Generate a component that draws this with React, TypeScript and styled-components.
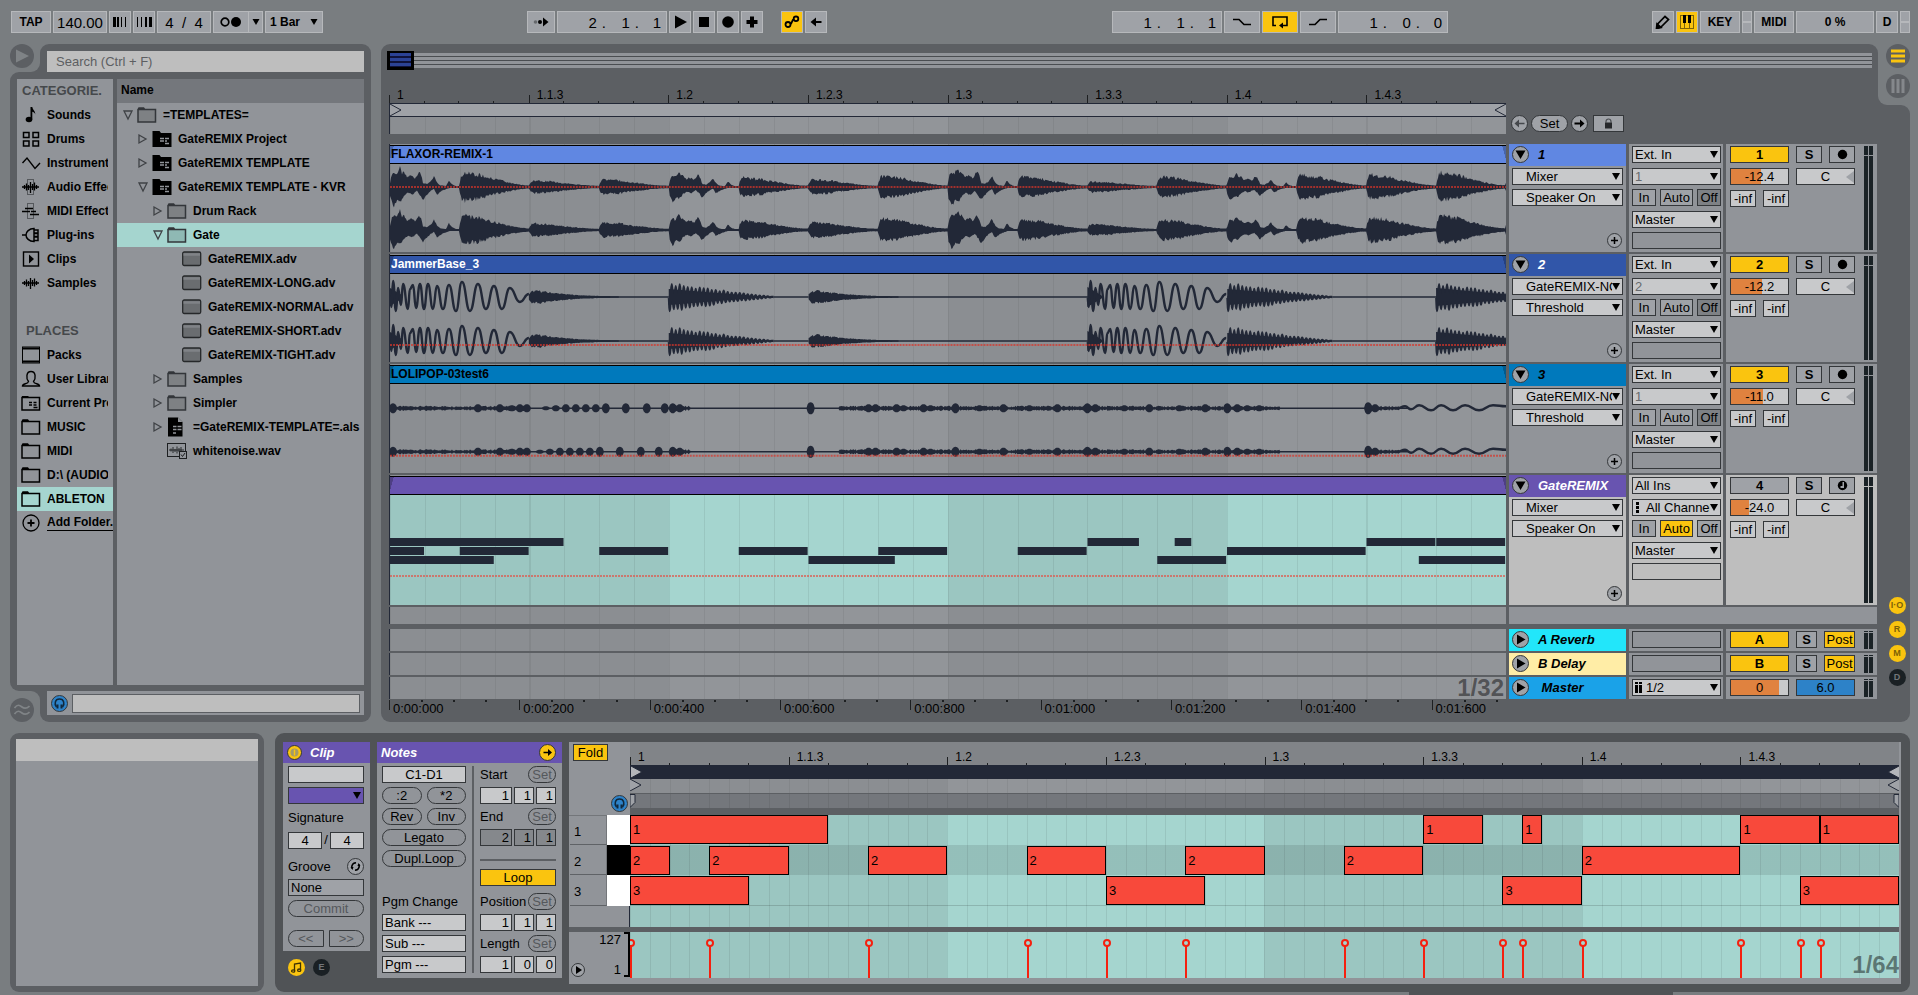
import React from "react";
import styled, {createGlobalStyle, css} from "styled-components";

const COLORS = {
    page: '#797d80',
    shell: '#5c5f63',
    shellDark: '#505356',
    surface: '#919499',
    surfaceDark: '#74777c',
    control: '#9fa2a7',
    field: '#c8c9cb',
    light: '#bebebe',
    edge: '#34373a',
    bevel: '#b6b8bb',
    yellow: '#fac40f',
    orange: '#e0823f',
    blue: '#2d82c8',
    mint: '#a5d5cf',
    mintDark: '#9bc6c1',
    ink: '#222837',
    purple: '#6854b0',
    red: '#f8493b',
    stem: '#f5200f',
}

const GlobalStyle = createGlobalStyle`
    *, *::before, *::after {
        box-sizing: border-box;
    }

    body {
        margin: 0;
        background-color: ${COLORS.page};
        color: #000;
        font-family: "Liberation Sans", Arial, sans-serif;
        font-size: 13px;
        line-height: 15px;
    }

    button, input, select {
        font: inherit;
        color: inherit;
        margin: 0;
        padding: 0;
        border: 0;
        border-radius: 0;
        background: none;
    }

    svg {
        display: block;
    }
`

const StyledApp = styled.div`
    padding: 0 8px 9px 10px;
`

/* toolbar */

const StyledToolbar = styled.header`
    display: flex;
    height: 44px;
    padding: 11px 0 11px 1px;
`

const StyledGroup = styled.div`
    display: flex;
    gap: 2px;
`

const StyledSpacer = styled.div<{grow: number}>`
    flex: ${props => props.grow} 1 0;
`

const cssBevel = css`
    background-color: ${COLORS.control};
    border: 1px solid ${COLORS.bevel};
`

const StyledToolButton = styled.button<{$width?: number, $on?: boolean, $gap?: boolean}>`
    ${cssBevel};
    display: flex;
    align-items: center;
    justify-content: center;
    gap: 10px;
    width: ${props => props.$width ?? 22}px;
    height: 22px;
    font-size: 12px;
    font-weight: bold;
    background-color: ${props => props.$on ? COLORS.yellow : COLORS.control};
    margin-left: ${props => props.$gap ? 16 : 0}px;
`

const StyledTempo = styled.input`
    ${cssBevel};
    width: 54px;
    height: 22px;
    font-size: 15px;
    text-align: center;
`

const StyledPosition = styled.div`
    ${cssBevel};
    display: grid;
    grid-template-columns: 1fr 33px 22px;
    align-items: center;
    width: 110px;
    height: 22px;
    padding-right: 5px;
    font-size: 15px;
`

const StyledPositionPart = styled.span`
    display: flex;
    justify-content: flex-end;
    gap: 5px;
`

const StyledMetronome = styled.div`
    ${cssBevel};
    display: grid;
    grid-template-columns: 1fr 14px;
    width: 50px;

    button {
        display: flex;
        align-items: center;
        justify-content: center;
    }

    button + button {
        border-left: 1px solid ${COLORS.bevel};
    }
`

const StyledLeds = styled.div`
    width: 10px;
    display: grid;
    grid-template-rows: 1fr 1fr;

    i {
        ${cssBevel};
    }
`

const Position: React.FC<{label: string, parts: string[]}> = ({label, parts}) => (
    <StyledPosition role="group" aria-label={label}>
        {parts.map((part, index) => (
            <StyledPositionPart key={index}>
                <span>{part}</span>
                {index < 2 && <span>.</span>}
            </StyledPositionPart>
        ))}
    </StyledPosition>
)

const Bars: React.FC<{widths: number[]}> = ({widths}) => (
    <svg width="16" height="12">
        {widths.map((width, index) => (
            <rect key={index} x={index * 4 + 1} y="1" width={width} height="10"/>
        ))}
    </svg>
)

const DownTriangle = () => <svg width="8" height="6"><path d="M0.5 0h7L4 6z"/></svg>

const Toolbar: React.FC = () => (
    <StyledToolbar>
        <StyledGroup>
            <StyledToolButton $width={40}>TAP</StyledToolButton>
            <StyledTempo aria-label="Tempo" defaultValue="140.00"/>
            <StyledToolButton aria-label="Nudge down"><Bars widths={[3, 2, 1, 1]}/></StyledToolButton>
            <StyledToolButton aria-label="Nudge up"><Bars widths={[1, 1, 2, 3]}/></StyledToolButton>
            <StyledTempo aria-label="Time signature" defaultValue="4  /  4"/>
            <StyledMetronome>
                <button aria-label="Metronome">
                    <svg width="22" height="12">
                        <circle cx="5" cy="6" r="3.8" fill="none" stroke="#000" strokeWidth="1.7"/>
                        <circle cx="16" cy="6" r="5"/>
                    </svg>
                </button>
                <button aria-label="Metronome options"><DownTriangle/></button>
            </StyledMetronome>
            <StyledToolButton $width={58}>1 Bar <DownTriangle/></StyledToolButton>
        </StyledGroup>
        <StyledSpacer grow={204}/>
        <StyledGroup>
            <StyledToolButton $width={28} aria-label="Follow">
                <svg width="16" height="10">
                    <circle cx="2.5" cy="5" r="1.8" fill="#66696d"/>
                    <circle cx="7" cy="5" r="2"/>
                    <path d="M10 0.5L15.5 5L10 9.5z"/>
                </svg>
            </StyledToolButton>
            <Position label="Arrangement position" parts={['2', '1', '1']}/>
            <StyledToolButton aria-label="Play"><svg width="14" height="14"><path d="M2 0.5L14 7L2 13.5z"/></svg></StyledToolButton>
            <StyledToolButton aria-label="Stop"><svg width="10" height="10"><rect width="10" height="10"/></svg></StyledToolButton>
            <StyledToolButton aria-label="Record"><svg width="12" height="12"><circle cx="6" cy="6" r="5.8"/></svg></StyledToolButton>
            <StyledToolButton aria-label="Overdub"><svg width="12" height="12"><path d="M4 0.5h4V4h3.5v4H8v3.5H4V8H0.5V4H4z"/></svg></StyledToolButton>
            <StyledToolButton $on $gap aria-label="Automation arm">
                <svg width="16" height="14" fill="none" stroke="#000" strokeWidth="1.8">
                    <circle cx="4" cy="9.5" r="2.5"/>
                    <circle cx="12" cy="3.8" r="2.3"/>
                    <path d="M6.3 9C8.5 9 7.5 4.5 9.7 4.3"/>
                </svg>
            </StyledToolButton>
            <StyledToolButton aria-label="Re-enable automation">
                <svg width="12" height="10"><path d="M0.5 5L6 0.5V4h5.5v2H6v3.5z"/></svg>
            </StyledToolButton>
        </StyledGroup>
        <StyledSpacer grow={285}/>
        <StyledGroup>
            <Position label="Loop start" parts={['1', '1', '1']}/>
            <StyledToolButton $width={36} aria-label="Punch in">
                <svg width="18" height="8" fill="none" stroke="#000" strokeWidth="1.7"><path d="M0 1.5h6l5 5h7"/></svg>
            </StyledToolButton>
            <StyledToolButton $width={36} $on aria-label="Loop">
                <svg width="18" height="14" fill="none" stroke="#000" strokeWidth="1.6">
                    <path d="M5 10.5H2V2h14v8.5h-4"/>
                    <path d="M8 10.5l4-3v6z" fill="#000" stroke="none"/>
                </svg>
            </StyledToolButton>
            <StyledToolButton $width={36} aria-label="Punch out">
                <svg width="18" height="8" fill="none" stroke="#000" strokeWidth="1.7"><path d="M0 6.5h6l5-5h7"/></svg>
            </StyledToolButton>
            <Position label="Loop length" parts={['1', '0', '0']}/>
        </StyledGroup>
        <StyledSpacer grow={204}/>
        <StyledGroup>
            <StyledToolButton aria-label="Draw mode">
                <svg width="16" height="14" fill="none" stroke="#000" strokeWidth="1.7">
                    <path d="M10 1.5l3.5 3L6 12l-4 1 0.7-4z"/>
                    <path d="M2 9l4 3.5L1.5 13.5z" fill="#000"/>
                </svg>
            </StyledToolButton>
            <StyledToolButton $on aria-label="Computer MIDI keyboard">
                <svg width="14" height="14">
                    <rect x="0.5" y="0.5" width="13" height="13" fill="none" stroke="#7d6207"/>
                    <path d="M4.5 8v6M9.5 8v6" stroke="#7d6207"/>
                    <path d="M3 0h3v8H3zM8 0h3v8H8z"/>
                </svg>
            </StyledToolButton>
            <StyledToolButton $width={40}>KEY</StyledToolButton>
            <StyledLeds><i/><i/></StyledLeds>
            <StyledToolButton $width={40}>MIDI</StyledToolButton>
            <StyledToolButton $width={78}>0 %</StyledToolButton>
            <StyledToolButton>D</StyledToolButton>
            <StyledLeds><i/><i/></StyledLeds>
        </StyledGroup>
    </StyledToolbar>
)

/* browser */

const StyledUpper = styled.div`
    display: flex;
    gap: 10px;
`

const StyledBrowser = styled.aside`
    flex: none;
    width: 361px;
    display: flex;
    flex-direction: column;
`

const StyledTabRow = styled.div`
    display: grid;
    grid-template-columns: 30px 1fr;
`

// page coloured cut-out that sits on the shell colour, so its inner corner is concave
const StyledNotch = styled.div<{$corner: 'bottom-right' | 'top-right'}>`
    background-color: ${COLORS.shell};

    > div {
        display: flex;
        align-items: ${props => props.$corner === 'top-right' ? 'flex-end' : 'flex-start'};
        height: 100%;
        background-color: ${COLORS.page};
        border-${props => props.$corner}-radius: 9px;
    }
`

const StyledRoundTab = styled.button`
    display: flex;
    align-items: center;
    justify-content: center;
    width: 24px;
    height: 24px;
    border-radius: 50%;
    background-color: ${COLORS.shell};
`

const StyledSearchTab = styled.div`
    background-color: ${COLORS.shell};
    border-radius: 9px 9px 0 0;
    padding: 7px 7px 0;
`

const StyledSearch = styled.input`
    width: 100%;
    height: 21px;
    padding: 0 9px;
    background-color: ${COLORS.light};

    &::placeholder {
        color: #5d5f62;
        opacity: 1;
    }
`

const StyledBrowserBody = styled.div`
    flex: 1;
    display: grid;
    grid-template-columns: 96px minmax(0, 1fr);
    gap: 4px;
    padding: 7px 7px 6px;
    background-color: ${COLORS.shell};
    border-radius: 9px 0 0 9px;
`

const StyledPane = styled.div`
    background-color: ${COLORS.surface};
    font-size: 12px;
    font-weight: bold;
    overflow: hidden;
`

const StyledPreviewTab = styled.div`
    background-color: ${COLORS.shell};
    border-radius: 0 0 9px 9px;
    padding: 0 7px 7px;
`

const StyledPreview = styled.div`
    display: flex;
    align-items: center;
    gap: 4px;
    height: 24px;
    padding: 0 4px;
    background-color: ${COLORS.surface};
`

const StyledPreviewWave = styled.div`
    flex: 1;
    height: 19px;
    background-color: ${COLORS.light};
    border: 1px solid ${COLORS.shell};
`

const StyledPaneTitle = styled.div<{$indent?: boolean}>`
    height: 24px;
    padding-left: ${props => props.$indent ? 9 : 5}px;
    font-size: 13px;
    line-height: 23px;
    color: #45484b;
    white-space: nowrap;
    overflow: hidden;
`

const StyledCategory = styled.button<{$selected?: boolean, $link?: boolean}>`
    display: grid;
    grid-template-columns: 20px minmax(0, 1fr);
    gap: 6px;
    align-items: center;
    width: 100%;
    height: 24px;
    padding: 0 ${props => props.$link ? 0 : 5}px 0 4px;
    text-align: left;
    background-color: ${props => props.$selected ? COLORS.mint : 'transparent'};

    span {
        white-space: nowrap;
        overflow: hidden;
        border-bottom: ${props => props.$link ? '1px solid #000' : 'none'};
    }
`

const StyledBlankRow = styled.div`
    height: 24px;
`

const StyledNameHeader = styled.div`
    height: 24px;
    padding-left: 4px;
    line-height: 23px;
    background-color: ${COLORS.surfaceDark};
`

const StyledTreeRow = styled.button<{$level: number, $selected?: boolean}>`
    display: flex;
    align-items: center;
    width: 100%;
    height: 24px;
    padding-left: ${props => 5 + props.$level * 15}px;
    white-space: nowrap;
    overflow: hidden;
    background-color: ${props => props.$selected ? COLORS.mint : 'transparent'};

    svg {
        flex: none;
    }
`

const StyledToggle = styled.span`
    flex: none;
    width: 15px;
    display: flex;
`

const StyledTreeIcon = styled.span`
    flex: none;
    width: 26px;
`

const FolderIcon: React.FC<{fill?: string, stroke?: string}> = ({fill = 'none', stroke = '#000'}) => (
    <svg width="20" height="18">
        <path d="M1 3.5V2.2a1 1 0 0 1 1-1h5l1.5 2.3z" fill={stroke}/>
        <path d="M1 3.5h17.5V16H1z" fill={fill} stroke={stroke} strokeWidth="1.5"/>
    </svg>
)

const ProjectIcon = () => (
    <svg width="20" height="18">
        <path d="M0.5 1h7L9 3h10.5v14H0.5z"/>
        <path d="M8 8.5h4M13 8.5h4M8 11h4M13 11h2M13 13.5h4" stroke={COLORS.surface} strokeWidth="1.3"/>
    </svg>
)

const CurrentProjectIcon = () => (
    <svg width="20" height="18">
        <path d="M1 3.5V2h6l1.5 1.5z"/>
        <path d="M1 3.5h17.5V16H1z" fill="none" stroke="#000" strokeWidth="1.5"/>
        <path d="M8 8.5h3M12.5 8.5h3M8 11h3M12.5 11h3M12.5 13.5h4" stroke="#000" strokeWidth="1.3"/>
    </svg>
)

const PresetIcon = () => (
    <svg width="20" height="16">
        <rect x="0.7" y="1" width="18" height="13.5" rx="1.5" fill="#6a6d70" stroke="#26282a" strokeWidth="1.3"/>
        <path d="M1.5 3.5h16.5" stroke="#808387" strokeWidth="2.5"/>
    </svg>
)

const SetIcon = () => (
    <svg width="20" height="20">
        <path d="M1 0.5h10L15.5 5v14.5H1z"/>
        <path d="M11 0.5V5h4.5" fill={COLORS.surface}/>
        <path d="M6 9.5h3.5M10.5 9.5h4M6 12.5h3.5M10.5 12.5h4M6 16h3" stroke={COLORS.surface} strokeWidth="1.5"/>
    </svg>
)

const SampleFileIcon = () => (
    <svg width="20" height="18" fill="none" stroke="#1d1f21">
        <rect x="0.5" y="1.5" width="18" height="13"/>
        <path d="M2 8h15M4 6.5v3M6 5v6M8 7v3M10 4.5v7M12 6v4M14 5v5" strokeWidth="0.9"/>
        <rect x="12.5" y="9.5" width="7" height="7" fill={COLORS.surface}/>
        <path d="M14 12.5l1.5 2L18 11"/>
    </svg>
)

const WaveGlyph: React.FC<{boxed?: boolean}> = ({boxed}) => (
    <svg width="20" height="18" stroke="#000">
        {boxed && <rect x="6.5" y="1.5" width="6" height="15" fill="none" stroke="#55585c"/>}
        <path d="M1 9h17M3.5 7v4M5.5 5.5v7M7.5 7v5M9.5 4v11M11.5 6v6M13.5 4.5v8M15.5 7v4" strokeWidth="1.3"/>
    </svg>
)

const categories: {name: string, icon: React.ReactNode}[] = [
    {
        name: 'Sounds',
        icon: <svg width="20" height="18"><ellipse cx="8" cy="13.5" rx="3.3" ry="2.7"/><path d="M9.5 1h1.8c0.5 3 3 3.5 3 7.5-0.5-2-2-2.5-3-2.8v7.8H9.5z"/></svg>,
    },
    {
        name: 'Drums',
        icon: <svg width="20" height="18" fill="none" stroke="#000" strokeWidth="1.5"><path d="M2.5 2.5H8v5H2.5zM12 2.5h5.5v5H12zM2.5 11H8v5H2.5zM12 11h5.5v5H12z"/></svg>,
    },
    {
        name: 'Instruments',
        icon: <svg width="20" height="18" fill="none" stroke="#000" strokeWidth="1.4"><path d="M1.5 9L6 4l8 10.5L19 9"/></svg>,
    },
    {name: 'Audio Effects', icon: <WaveGlyph boxed/>},
    {
        name: 'MIDI Effects',
        icon: <svg width="20" height="18" fill="none" stroke="#000" strokeWidth="1.4"><rect x="6.5" y="1.5" width="6" height="15" stroke="#55585c" strokeWidth="1"/><path d="M4 6.5h8M1 9.5h8M10 9.5h5M9 12.5h9"/></svg>,
    },
    {
        name: 'Plug-ins',
        icon: <svg width="20" height="18" fill="none" stroke="#000" strokeWidth="1.5"><path d="M1 9h4M13 2.5v13C8 15.500 5 12 5 9s3-6.500 8-6.500zM13 4h4v3h-4M13 7.5h4v3h-4M13 11h4v3.500h-4"/></svg>,
    },
    {
        name: 'Clips',
        icon: <svg width="20" height="18"><rect x="2.5" y="2" width="15" height="14" fill="none" stroke="#000" strokeWidth="1.4"/><path d="M8 4.5L13 9l-5 4.5z"/></svg>,
    },
    {name: 'Samples', icon: <WaveGlyph/>},
]

const places: {name: string, icon: React.ReactNode}[] = [
    {
        name: 'Packs',
        icon: <svg width="20" height="18" fill="none" stroke="#000"><rect x="1.5" y="1" width="17" height="16"/><path d="M1.5 2.5h17M1.5 15.5h17" strokeWidth="2"/></svg>,
    },
    {
        name: 'User Library',
        icon: <svg width="20" height="18" fill="none" stroke="#000" strokeWidth="1.4"><path d="M1.5 16c0-3 5.500-1.500 6-4.500C5 8.500 5 1.500 10 1.500s5 7 2.500 10c0.500 3 6 1.500 6 4.500z"/></svg>,
    },
    {name: 'Current Project', icon: <CurrentProjectIcon/>},
    {name: 'MUSIC', icon: <FolderIcon/>},
    {name: 'MIDI', icon: <FolderIcon/>},
    {name: 'D:\\ (AUDIO)', icon: <FolderIcon/>},
    {name: 'ABLETON', icon: <FolderIcon/>},
]

type TreeNode = {
    name: string,
    level: number,
    icon: React.ReactNode,
    open?: boolean,
    selected?: boolean,
}

const treeFolder = <FolderIcon fill="#7e8184" stroke="#33363a"/>

const tree: TreeNode[] = [
    {name: '=TEMPLATES=', level: 0, icon: treeFolder, open: true},
    {name: 'GateREMIX Project', level: 1, icon: <ProjectIcon/>, open: false},
    {name: 'GateREMIX TEMPLATE', level: 1, icon: <ProjectIcon/>, open: false},
    {name: 'GateREMIX TEMPLATE - KVR', level: 1, icon: <ProjectIcon/>, open: true},
    {name: 'Drum Rack', level: 2, icon: treeFolder, open: false},
    {name: 'Gate', level: 2, icon: <FolderIcon fill="#8fb9b4" stroke="#33363a"/>, open: true, selected: true},
    {name: 'GateREMIX.adv', level: 3, icon: <PresetIcon/>},
    {name: 'GateREMIX-LONG.adv', level: 3, icon: <PresetIcon/>},
    {name: 'GateREMIX-NORMAL.adv', level: 3, icon: <PresetIcon/>},
    {name: 'GateREMIX-SHORT.adv', level: 3, icon: <PresetIcon/>},
    {name: 'GateREMIX-TIGHT.adv', level: 3, icon: <PresetIcon/>},
    {name: 'Samples', level: 2, icon: treeFolder, open: false},
    {name: 'Simpler', level: 2, icon: treeFolder, open: false},
    {name: '=GateREMIX-TEMPLATE=.als', level: 2, icon: <SetIcon/>, open: false},
    {name: 'whitenoise.wav', level: 2, icon: <SampleFileIcon/>},
]

const HeadphoneButton: React.FC = () => (
    <StyledCircle aria-label="Preview" $fill={COLORS.blue}>
        <svg width="13" height="13" fill="none" stroke="#10283c" strokeWidth="1.6">
            <path d="M3.5 10C1 7 2 2 6.5 2s5.5 5 3 8"/>
            <path d="M4.5 7.5v4M8.5 7.5v4" strokeWidth="2"/>
        </svg>
    </StyledCircle>
)

const Browser: React.FC = () => (
    <StyledBrowser>
        <StyledTabRow>
            <StyledNotch $corner="bottom-right">
                <div>
                    <StyledRoundTab aria-label="Hide browser">
                        <svg width="14" height="14"><path d="M1 0.5L14 7L1 13.5z" fill="#7f8386"/></svg>
                    </StyledRoundTab>
                </div>
            </StyledNotch>
            <StyledSearchTab>
                <StyledSearch aria-label="Search" placeholder="Search (Ctrl + F)"/>
            </StyledSearchTab>
        </StyledTabRow>
        <StyledBrowserBody>
            <StyledPane>
                <StyledPaneTitle>CATEGORIE.</StyledPaneTitle>
                {categories.map(({name, icon}) => (
                    <StyledCategory key={name}>{icon}<span>{name}</span></StyledCategory>
                ))}
                <StyledBlankRow/>
                <StyledPaneTitle $indent>PLACES</StyledPaneTitle>
                {places.map(({name, icon}) => (
                    <StyledCategory key={name} $selected={name === 'ABLETON'}>{icon}<span>{name}</span></StyledCategory>
                ))}
                <StyledCategory $link>
                    <svg width="20" height="18" fill="none" stroke="#000" strokeWidth="1.3">
                        <circle cx="10" cy="9" r="8"/>
                        <path d="M6.5 9h7M10 5.5v7" strokeWidth="1.8"/>
                    </svg>
                    <span>Add Folder...</span>
                </StyledCategory>
            </StyledPane>
            <StyledPane>
                <StyledNameHeader>Name</StyledNameHeader>
                {tree.map(({name, level, icon, open, selected}) => (
                    <StyledTreeRow key={name} $level={level} $selected={selected}>
                        <StyledToggle>
                            {open !== undefined && (
                                <svg width="12" height="12" fill="none" stroke="#3f4246" strokeWidth="1.3">
                                    <path d={open ? 'M2 2h8L6 10z' : 'M2 2l7 4-7 4z'}/>
                                </svg>
                            )}
                        </StyledToggle>
                        <StyledTreeIcon>{icon}</StyledTreeIcon>
                        {name}
                    </StyledTreeRow>
                ))}
            </StyledPane>
        </StyledBrowserBody>
        <StyledTabRow>
            <StyledNotch $corner="top-right">
                <div>
                    <StyledRoundTab aria-label="Groove pool">
                        <svg width="16" height="14" fill="none" stroke="#808487" strokeWidth="1.7">
                            <path d="M0.5 5c3-4 5-3 7.5-1s4.500 2 7.500-1M0.5 11c3-4 5-3 7.5-1s4.500 2 7.500-1"/>
                        </svg>
                    </StyledRoundTab>
                </div>
            </StyledNotch>
            <StyledPreviewTab>
                <StyledPreview>
                    <HeadphoneButton/>
                    <StyledPreviewWave/>
                </StyledPreview>
            </StyledPreviewTab>
        </StyledTabRow>
    </StyledBrowser>
)

/* shared controls */

const StyledCircle = styled.button<{$fill?: string, $size?: number}>`
    flex: none;
    display: flex;
    align-items: center;
    justify-content: center;
    width: ${props => props.$size ?? 17}px;
    height: ${props => props.$size ?? 17}px;
    border: 1px solid ${COLORS.edge};
    border-radius: 50%;
    background-color: ${props => props.$fill ?? COLORS.control};
`

const cssBox = css`
    height: 17px;
    border: 1px solid ${COLORS.edge};
    line-height: 15px;
    white-space: nowrap;
    overflow: hidden;
`

const StyledBoxButton = styled.button<{$on?: boolean, $off?: boolean, $bold?: boolean}>`
    ${cssBox};
    display: flex;
    align-items: center;
    justify-content: center;
    background-color: ${props => props.$on ? COLORS.yellow : props.$off ? '#7e8185' : COLORS.control};
    font-weight: ${props => props.$bold ? 'bold' : 'normal'};
`

const StyledPill = styled.button<{$dim?: boolean, $shape?: string}>`
    height: 17px;
    border: 1px solid ${COLORS.edge};
    border-radius: ${props => props.$shape ?? '9px'};
    background-color: ${COLORS.surface};
    color: ${props => props.$dim ? '#55585c' : '#000'};
    line-height: 15px;
    text-align: center;
    white-space: nowrap;
`

const StyledEmptyBox = styled.div`
    ${cssBox};
`

const StyledField = styled.input<{$fill?: number, $background?: string, $align?: string, $tight?: boolean}>`
    ${cssBox};
    width: 100%;
    min-width: 0;
    padding: 0 ${props => props.$tight ? 0 : 2}px;
    text-align: ${props => props.$align ?? 'center'};
    background: ${props => `linear-gradient(90deg, ${COLORS.orange} ${props.$fill ?? 0}%, ${props.$background ?? COLORS.field} ${props.$fill ?? 0}%)`};
`

const StyledSelectWrapper = styled.div<{$background?: string}>`
    position: relative;
    background-color: ${props => props.$background ?? COLORS.field};

    &::after {
        content: '';
        position: absolute;
        right: 3px;
        top: 5px;
        border: 4px solid transparent;
        border-top: 7px solid #000;
        border-bottom: 0;
        pointer-events: none;
    }
`

const StyledSelect = styled.select<{$indent?: number, $dim?: boolean}>`
    ${cssBox};
    display: block;
    appearance: none;
    width: 100%;
    padding: 0 10px 0 ${props => props.$indent ?? 2}px;
    color: ${props => props.$dim ? '#66696d' : '#000'};
`

const StyledSelectGlyph = styled.span`
    position: absolute;
    left: 3px;
    top: 3px;
    pointer-events: none;
`

type SelectProps = {
    label: string,
    value: string,
    indent?: number,
    dim?: boolean,
    background?: string,
    glyph?: React.ReactNode,
}

const Select: React.FC<SelectProps> = ({label, value, indent, dim, background, glyph}) => (
    <StyledSelectWrapper $background={background}>
        {glyph && <StyledSelectGlyph>{glyph}</StyledSelectGlyph>}
        <StyledSelect aria-label={label} $indent={indent} $dim={dim}>
            <option>{value}</option>
        </StyledSelect>
    </StyledSelectWrapper>
)

/* arrangement */

const StyledArranger = styled.main`
    flex: 1;
    min-width: 0;
    display: grid;
    grid-template-columns: minmax(0, 1fr) 32px;
`

const StyledArrangerPanel = styled.div`
    background-color: ${COLORS.shell};
    border-radius: 9px 9px 0 9px;
    padding: 9px 1px 0 8px;
`

const StyledGutter = styled.div`
    display: flex;
    flex-direction: column;
`

const StyledViewNotch = styled.div`
    background-color: ${COLORS.shell};

    > div {
        display: flex;
        flex-direction: column;
        align-items: flex-end;
        gap: 6px;
        height: 61px;
        background-color: ${COLORS.page};
        border-bottom-left-radius: 9px;
    }
`

const StyledGutterBody = styled.div`
    flex: 1;
    display: flex;
    flex-direction: column;
    justify-content: flex-end;
    align-items: center;
    gap: 7px;
    padding: 0 0 36px 6px;
    background-color: ${COLORS.shell};
    border-radius: 0 9px 9px 0;
`

const StyledShowButton = styled.button<{$on?: boolean}>`
    width: 17px;
    height: 17px;
    border-radius: 50%;
    font-size: 9px;
    font-weight: bold;
    line-height: 17px;
    text-align: center;
    background-color: ${props => props.$on ? COLORS.yellow : '#1a2024'};
    color: ${props => props.$on ? '#7d6207' : '#73767a'};
`

const StyledOverview = styled.div`
    position: relative;
    height: 15px;
    margin: 0 5px 0 0;
    background: repeating-linear-gradient(180deg, ${COLORS.surface} 0 3px, #4a4d51 3px 4px);
`

const StyledOverviewWindow = styled.div`
    position: absolute;
    left: -2px;
    top: -2px;
    width: 27px;
    height: 19px;
    border: 3px solid #000;
    border-top-width: 2px;
    background: repeating-linear-gradient(180deg, #2b4296 0 3px, #10133c 3px 5px);
`

const cssTrackColumns = css`
    display: grid;
    grid-template-columns: minmax(0, 1fr) 117px 94px 151px;
    column-gap: 3px;
`

const StyledTimelineHead = styled.div`
    ${cssTrackColumns};
    margin-bottom: 10px;
`

const StyledRuler = styled.div<{$height: number}>`
    display: grid;
    grid-template-columns: repeat(8, minmax(0, 1fr));
    height: ${props => props.$height}px;
    font-size: 12px;

    span {
        display: flex;
        align-items: flex-end;
        padding-left: 8px;
        background:
            linear-gradient(#1d1f21, #1d1f21) 0 100% / 1px 8px no-repeat,
            linear-gradient(#1d1f21, #1d1f21) 25% 100% / 1px 2px no-repeat,
            linear-gradient(#1d1f21, #1d1f21) 50% 100% / 1px 2px no-repeat,
            linear-gradient(#1d1f21, #1d1f21) 75% 100% / 1px 2px no-repeat;
    }
`

const StyledLoopBar = styled.div`
    display: flex;
    justify-content: space-between;
    height: 14px;
    border: 1px solid ${COLORS.ink};
    border-right: 0;
    background-color: ${COLORS.control};
`

const cssGrid = css<{$division?: number}>`
    background:
        repeating-linear-gradient(90deg, rgba(0, 0, 0, 0.06) 0 1px, transparent 1px calc(100% / ${props => props.$division ?? 32})),
        repeating-linear-gradient(90deg, #8b8e92 0 25%, #929599 25% 50%);
`

const StyledScrub = styled.div`
    ${cssGrid};
    height: 17px;
    border-left: 1px solid ${COLORS.ink};
`

const StyledLocators = styled.div`
    grid-column: 2 / 5;
    align-self: end;
    display: flex;
    align-items: center;
    gap: 3px;
    padding: 0 0 2px 2px;
`

const StyledLocatorPill = styled(StyledPill)`
    width: 37px;
    background-color: ${COLORS.control};
`

const StyledLock = styled(StyledBoxButton)`
    width: 31px;
    margin-left: 2px;
`

const StyledTracks = styled.div`
    display: flex;
    flex-direction: column;
    gap: 2px;
`

const StyledTrack = styled.section<{$height: number, $spaced?: boolean}>`
    ${cssTrackColumns};
    grid-template-rows: minmax(0, 1fr);
    height: ${props => props.$height}px;
    margin-top: ${props => props.$spaced ? 3 : 0}px;
`

const StyledLane = styled.div`
    ${cssGrid};
    display: flex;
    flex-direction: column;
    border-left: 1px solid ${COLORS.ink};
    padding-top: 1px;
    min-width: 0;
    min-height: 0;
`

const StyledEmptyLane = styled.div`
    ${cssGrid};
    display: flex;
    align-items: center;
    justify-content: flex-end;
    padding-right: 2px;
    border-left: 1px solid ${COLORS.ink};
`

const StyledClipTitle = styled.div<{$color: string, $light?: boolean}>`
    flex: none;
    height: 19px;
    padding-left: 1px;
    border-top: 1px solid #000;
    border-bottom: 1px solid #000;
    background:
        linear-gradient(75deg, transparent 60%, rgba(0, 0, 0, 0.25) 62%) 100% 0 / 5px 17px no-repeat,
        linear-gradient(105deg, rgba(0, 0, 0, 0.25) 38%, transparent 40%) 0 0 / 5px 17px no-repeat,
        ${props => props.$color};
    color: ${props => props.$light ? '#fff' : '#000'};
    font-size: 12px;
    font-weight: bold;
    line-height: 17px;
`

const StyledMidiBody = styled.div`
    flex: 1;
    display: flex;
    min-height: 0;
    background:
        repeating-linear-gradient(90deg, rgba(0, 0, 0, 0.07) 0 1px, transparent 1px calc(100% / 32)),
        repeating-linear-gradient(90deg, ${COLORS.mintDark} 0 25%, ${COLORS.mint} 25% 50%);
`

const StyledChart = styled.svg`
    flex: 1;
    width: 100%;
    height: 100%;
    min-height: 0;
`

const StyledGridLabel = styled.span`
    font-size: 24px;
    line-height: 22px;
    font-weight: bold;
    color: rgba(0, 0, 0, 0.45);
`

const StyledCell = styled.div<{$selected?: boolean}>`
    background-color: ${props => props.$selected ? COLORS.light : COLORS.surface};
    min-width: 0;
`

const StyledNameCell = styled(StyledCell)`
    display: flex;
    flex-direction: column;
    padding-bottom: 4px;
`

const StyledNameStrip = styled.div<{$color: string, $light?: boolean}>`
    display: flex;
    align-items: center;
    gap: 9px;
    height: 22px;
    padding: 0 0 1px 3px;
    background-color: ${props => props.$color};
    color: ${props => props.$light ? '#fff' : '#000'};
    font-weight: bold;
    font-style: italic;
    white-space: nowrap;
`

const StyledDevices = styled.div`
    display: flex;
    flex-direction: column;
    gap: 4px;
    padding: 2px 3px 0;
`

const StyledAddLane = styled(StyledCircle)`
    margin: auto 4px 0 auto;
`

const StyledIoCell = styled(StyledCell)`
    padding: 2px 2px 0 3px;
`

const StyledRows = styled.div`
    display: flex;
    flex-direction: column;
    justify-content: space-between;
    height: 103px;
`

const StyledMonitor = styled.div`
    display: grid;
    grid-template-columns: 24px 1fr 24px;
    gap: 4px;
`

const StyledMixerCell = styled(StyledCell)`
    display: grid;
    grid-template-columns: 125px auto;
    justify-content: space-between;
    padding: 2px 4px 2px 4px;
`

const StyledMixerRows = styled.div`
    display: grid;
    grid-template-columns: 26px 26px 26px 26px;
    grid-auto-rows: 17px;
    gap: 5px 7px;
    align-content: start;
`

const StyledWide = styled.div`
    grid-column: span 2;
    display: grid;
`

const StyledSendRow = styled.div`
    grid-column: span 2;
    display: grid;
    grid-template-columns: 21px 31px;
    justify-content: space-between;
`

const StyledPan = styled.div`
    grid-column: span 2;
    position: relative;

    &::after {
        content: '';
        position: absolute;
        right: 1px;
        top: 3px;
        border: 6px solid transparent;
        border-right: 8px solid ${COLORS.control};
        border-left: 0;
    }
`

const StyledMeter = styled.div<{$mark: number}>`
    display: grid;
    grid-template-columns: 4px 4px;
    gap: 1px;

    i {
        background:
            linear-gradient(#1a2226, #1a2226) 0 ${props => props.$mark}px / 100% 100% no-repeat,
            linear-gradient(#1a2226, #1a2226) 0 0 / 100% ${props => props.$mark - 1}px no-repeat;
    }
`

const StyledTimeRuler = styled.div`
    display: flex;
    overflow: hidden;
    padding-top: 1px;

    span {
        flex: none;
        width: calc(100% * 7 / 60);
        padding: 1px 0 0 4px;
        background:
            linear-gradient(#1d1f21, #1d1f21) 0 0 / 1px 10px no-repeat,
            linear-gradient(#1d1f21, #1d1f21) 25% 0 / 2px 2px no-repeat,
            linear-gradient(#1d1f21, #1d1f21) 50% 0 / 2px 2px no-repeat,
            linear-gradient(#1d1f21, #1d1f21) 75% 0 / 2px 2px no-repeat;
    }
`

const WAVE_WIDTH = 1117
const STEP = WAVE_WIDTH / 16

type Point = [number, number]

const noise = (seed: number) => {
    const value = Math.sin(seed * 12.9898) * 43758.5453
    return value - Math.floor(value)
}

const lerp = (points: Point[], x: number) => {
    const index = points.findIndex(point => point[0] >= x)
    if (index <= 0) return index === 0 ? points[0][1] : points[points.length - 1][1]
    const [x0, y0] = points[index - 1]
    const [x1, y1] = points[index]
    return y0 + (y1 - y0) * (x - x0) / (x1 - x0)
}

// builds a closed outline round the centre line from an upper and a lower envelope
const outline = (center: number, from: number, to: number, envelope: (x: number) => Point) => {
    const upper: string[] = []
    const lower: string[] = []
    for (let x = from; x <= to; x++) {
        const [up, down] = envelope(x)
        upper.push(`${x} ${(center - up).toFixed(1)}`)
        lower.unshift(`${x} ${(center + down).toFixed(1)}`)
    }
    return `M${upper.join('L')}L${lower.join('L')}z`
}

const curve = (center: number, offset: number, points: Point[]) => (
    points.map(([x, y], index) => {
        const px = offset + x
        const py = center - y
        if (index === 0) return `M${px} ${py}`
        const middle = offset + (x + points[index - 1][0]) / 2
        return `C${middle} ${center - points[index - 1][1]} ${middle} ${py} ${px} ${py}`
    }).join('')
)

const KICK_UP: Point[] = [[0, 4], [2, 14], [4, 15], [6, 13], [8, 16], [10, 20], [12, 14], [14, 15], [17, 10], [20, 12], [23, 11], [25, 9], [29, 16], [32, 10], [33, 4], [37, 3], [41, 6], [44, 11], [47, 5], [50, 2], [56, 1], [59, 7], [62, 3], [66, 1], [70, 1]]
const KICK_DOWN: Point[] = [[0, 10], [4, 20], [7, 13], [11, 15], [14, 9], [18, 6], [22, 8], [27, 4], [30, 8], [33, 13], [37, 8], [41, 4], [44, 2], [47, 8], [52, 4], [57, 2], [60, 1], [70, 1]]
const HIT_SHAPE: Point[] = [[0, 0.3], [2, 0.85], [5, 1], [12, 0.9], [22, 0.82], [32, 0.55], [42, 0.4], [52, 0.22], [62, 0.1], [70, 0.06]]

const HITS: {kick?: boolean, level: number}[] = [
    {kick: true, level: 1}, {level: 14}, {level: 6}, {level: 7},
    {kick: true, level: 0.8}, {level: 9}, {level: 7}, {level: 11},
    {kick: true, level: 1.02}, {level: 10}, {level: 5}, {level: 10},
    {kick: true, level: 0.72}, {level: 12}, {level: 12}, {level: 14},
]

const drumPath = (center: number, seed: number) => (
    outline(center, 0, WAVE_WIDTH, x => {
        const {kick, level} = HITS[Math.min(15, Math.floor(x / STEP))]
        const local = x % STEP
        if (kick) {
            return [
                Math.max(1, lerp(KICK_UP, local) * level * (0.86 + noise(x + seed) * 0.2)),
                Math.max(1, lerp(KICK_DOWN, local) * level * (0.86 + noise(x + seed + 7) * 0.2)),
            ]
        }
        const shape = lerp(HIT_SHAPE, local) * level
        return [
            0.8 + shape * (0.75 + noise(x * 1.3 + seed) * 0.4),
            0.8 + shape * (0.7 + noise(x * 1.7 + seed) * 0.4),
        ]
    })
)

const CHIRP: Point[] = [[0, 0], [1.5, -10], [3, 16], [6, -14], [8, 9], [11, -8], [13, 13], [18, -12], [20, 8], [23, 12], [26, -11], [30, 13], [34, -12], [38, 13], [43, -12], [47, 11], [53, -12], [59, 12], [66, -14], [72, 15], [80, -14], [88, 13], [96, -12], [104, 11], [112, -12], [120, 9], [130, -5], [139, 3]]

const burst = (length: number, level: number): Point[] => {
    const points: Point[] = [[0, 0], [1, -level]]
    for (let x = 3; x < length; x += 2) {
        const fade = Math.pow(1 - x / length, 1.1)
        const side = points.length % 2 === 0 ? 1 : -1
        points.push([x, side * level * fade * (0.8 + noise(x) * 0.25)])
    }
    points.push([length, 0])
    return points
}

const TAIL: Point[] = [[0, 0.4], [3, 0.9], [10, 1], [22, 0.65], [36, 0.4], [52, 0.2], [70, 0.08], [90, 0.02]]

const tailPath = (center: number, from: number, level: number) => (
    outline(center, from, from + 90, x => {
        const shape = lerp(TAIL, x - from) * level
        return [0.6 + shape * (0.7 + noise(x) * 0.4), 0.6 + shape * (0.7 + noise(x + 5) * 0.4)]
    })
)

const corePath = (center: number, from: number, to: number, level: number) => (
    outline(center, from, to, x => {
        const value = level * Math.pow(1 - (x - from) / 105, 1.1)
        return [value, value]
    })
)

const bassFill = (center: number) => [
    tailPath(center, 139, 6),
    tailPath(center, 419, 6),
    corePath(center, 279, 384, 8),
    corePath(center, 838, 943, 8),
    corePath(center, 1047, 1117, 9),
    outline(center, 0, 12, x => [9 - x * 0.6, 9 - x * 0.6]),
    outline(center, 698, 714, x => [10 - (x - 698) * 0.6, 10 - (x - 698) * 0.6]),
].join('')

const bassStroke = (center: number) => [
    curve(center, 0, CHIRP),
    curve(center, 279, burst(105, 14)),
    curve(center, 698, CHIRP),
    curve(center, 838, burst(105, 14)),
    curve(center, 1047, burst(105, 14)),
].join('')

const bassRest = (center: number) => `M180 ${center}H279M384 ${center}H419M460 ${center}H698M943 ${center}H1047`

const BLIPS: Point[] = [[3, 5], [88, 4], [110, 4], [122, 3], [130, 4], [137, 4], [156, 2], [166, 3], [176, 4], [186, 4], [196, 4], [206, 4], [216, 5], [236, 5], [257, 5], [275, 5], [283, 5], [290, 4], [421, 6], [479, 4], [486, 4], [507, 4], [514, 3], [534, 4], [541, 3], [566, 5], [590, 3], [614, 4], [640, 3], [668, 4], [698, 5], [706, 4], [735, 3], [760, 4], [790, 3], [816, 4], [838, 5], [848, 4], [858, 3], [870, 3], [979, 6], [986, 4]]
const NOISY: Point[] = [[5, 139], [283, 300], [450, 475], [479, 560], [560, 698], [698, 890], [979, 1010]]

const texturePath = (center: number, shift: number) => (
    outline(center, 0, 1020, x => {
        const noisy = NOISY.some(([from, to]) => x >= from && x <= to)
        let level = noisy ? 1 + noise(x) * 1.6 : 0.8
        BLIPS.forEach(([position, amount]) => {
            const distance = Math.abs(x - position - (position > 140 && position < 280 ? shift : 0))
            if (distance < 4) level = Math.max(level, amount * Math.sqrt(1 - distance * distance / 16))
        })
        return [level, level]
    })
)

const textureStroke = (center: number) => (
    curve(center, 1008, [[0, 0], [8, 2], [14, -1], [22, 3], [34, -2], [44, 3], [56, -2], [68, 3], [82, -2], [96, 3], [109, 2]])
)

type WaveProps = {
    fill: string,
    stroke?: string,
    rest?: string,
    automation: number,
}

const Wave: React.FC<WaveProps> = ({fill, stroke, rest, automation}) => (
    <StyledChart viewBox="0 0 1117 88" preserveAspectRatio="none" aria-hidden>
        <path d={fill} fill={COLORS.ink}/>
        {stroke && <path d={stroke} fill="none" stroke={COLORS.ink} strokeWidth="2.4"/>}
        {rest && <path d={rest} fill="none" stroke={COLORS.ink} strokeWidth="1.4"/>}
        <path d={`M0 ${automation}H1117`} stroke="#d8342a" strokeOpacity="0.7" strokeWidth="2" strokeDasharray="2 1"/>
    </StyledChart>
)

type Note = {row: number, start: number, end: number}

const notes: Note[] = [
    {row: 0, start: 0, end: 10},
    {row: 0, start: 40, end: 43},
    {row: 0, start: 45, end: 46},
    {row: 0, start: 56, end: 60},
    {row: 0, start: 60, end: 64},
    {row: 1, start: 0, end: 2},
    {row: 1, start: 4, end: 8},
    {row: 1, start: 12, end: 16},
    {row: 1, start: 20, end: 24},
    {row: 1, start: 28, end: 32},
    {row: 1, start: 36, end: 40},
    {row: 1, start: 48, end: 56},
    {row: 2, start: 0, end: 6},
    {row: 2, start: 24, end: 29},
    {row: 2, start: 44, end: 48},
    {row: 2, start: 59, end: 64},
]

const MidiThumbnail: React.FC = () => (
    <StyledChart viewBox="0 0 640 110" preserveAspectRatio="none" aria-hidden>
        {notes.map(({row, start, end}) => (
            <rect key={`${row}-${start}`} x={start * 10} y={43 + row * 9} width={(end - start) * 10 - 0.5} height="8" fill={COLORS.ink}/>
        ))}
        <path d="M0 81H640" stroke="#e0564a" strokeOpacity="0.7" strokeWidth="2" strokeDasharray="2 1" vectorEffect="non-scaling-stroke"/>
    </StyledChart>
)

type Track = {
    id: string,
    name: string,
    clip: string,
    color: string,
    light?: boolean,
    height: number,
    device: string,
    parameter: string,
    input: string,
    channel: string,
    volume: string,
    fill: number,
    midi?: boolean,
    content: React.ReactNode,
}

const tracks: Track[] = [
    {
        id: '1', name: '1', clip: 'FLAXOR-REMIX-1', color: '#6087e2', height: 108,
        device: 'Mixer', parameter: 'Speaker On', input: 'Ext. In', channel: '1', volume: '-12.4', fill: 52,
        content: <Wave fill={drumPath(23, 0) + drumPath(66, 31)} automation={23}/>,
    },
    {
        id: '2', name: '2', clip: 'JammerBase_3', color: '#3156a9', light: true, height: 108,
        device: 'GateREMIX-NORMAL', parameter: 'Threshold', input: 'Ext. In', channel: '2', volume: '-12.2', fill: 55,
        content: (
            <Wave
                fill={bassFill(23) + bassFill(67)}
                stroke={bassStroke(23) + bassStroke(67)}
                rest={bassRest(23) + bassRest(67)}
                automation={71}
            />
        ),
    },
    {
        id: '3', name: '3', clip: 'LOLIPOP-03test6', color: '#0079bc', height: 109,
        device: 'GateREMIX-NORMAL', parameter: 'Threshold', input: 'Ext. In', channel: '1', volume: '-11.0', fill: 57,
        content: (
            <Wave
                fill={texturePath(24, 0) + texturePath(67, -6)}
                stroke={textureStroke(24) + textureStroke(67)}
                automation={71}
            />
        ),
    },
    {
        id: '4', name: 'GateREMIX', clip: '', color: COLORS.purple, light: true, height: 130,
        device: 'Mixer', parameter: 'Speaker On', input: 'All Ins', channel: 'All Channels', volume: '-24.0', fill: 31, midi: true,
        content: <StyledMidiBody><MidiThumbnail/></StyledMidiBody>,
    },
]

const Meter: React.FC<{mark: number}> = ({mark}) => <StyledMeter $mark={mark}><i/><i/></StyledMeter>

const FoldButton: React.FC<{open?: boolean}> = ({open}) => (
    <StyledCircle aria-label="Unfold track">
        <svg width="11" height="11"><path d={open ? 'M0.5 1.5h10L5.5 10z' : 'M2 0.5v10L10.5 5.5z'}/></svg>
    </StyledCircle>
)

const TrackRow: React.FC<{track: Track}> = ({track}) => (
    <StyledTrack $height={track.height}>
        <StyledLane>
            <StyledClipTitle $color={track.color} $light={track.light}>{track.clip}</StyledClipTitle>
            {track.content}
        </StyledLane>
        <StyledNameCell $selected={track.midi}>
            <StyledNameStrip $color={track.color} $light={track.light}>
                <FoldButton open/>{track.name}
            </StyledNameStrip>
            <StyledDevices>
                <Select label="Device" value={track.device} indent={13}/>
                <Select label="Parameter" value={track.parameter} indent={13}/>
            </StyledDevices>
            <StyledAddLane $size={15} aria-label="Add automation lane">
                <svg width="9" height="9" stroke="#000" strokeWidth="1.5"><path d="M1 4.5h7M4.5 1v7"/></svg>
            </StyledAddLane>
        </StyledNameCell>
        <StyledIoCell $selected={track.midi}>
            <StyledRows>
                <Select label="Input type" value={track.input}/>
                <Select
                    label="Input channel"
                    value={track.channel}
                    dim={!track.midi}
                    indent={track.midi ? 13 : 2}
                    glyph={track.midi && <svg width="5" height="12"><path d="M1 0h3v3H1zM1 4h3v3H1zM1 8h3v3H1z"/></svg>}
                />
                <StyledMonitor>
                    <StyledBoxButton>In</StyledBoxButton>
                    <StyledBoxButton $on={track.midi}>Auto</StyledBoxButton>
                    <StyledBoxButton $off={!track.midi}>Off</StyledBoxButton>
                </StyledMonitor>
                <Select label="Output type" value="Master"/>
                <StyledEmptyBox/>
            </StyledRows>
        </StyledIoCell>
        <StyledMixerCell $selected={track.midi}>
            <StyledMixerRows>
                <StyledWide><StyledBoxButton $bold $on={!track.midi}>{track.id}</StyledBoxButton></StyledWide>
                <StyledBoxButton $bold>S</StyledBoxButton>
                <StyledBoxButton aria-label="Arm">
                    <svg width="11" height="11">
                        <circle cx="5.5" cy="5.5" r="4.7"/>
                        {track.midi && <path d="M5.5 2v4h-2v2H7V2z" fill={COLORS.control}/>}
                    </svg>
                </StyledBoxButton>
                <StyledWide><StyledField aria-label="Volume" defaultValue={track.volume} $fill={track.fill}/></StyledWide>
                <StyledPan><StyledField aria-label="Pan" defaultValue="C"/></StyledPan>
                <StyledField aria-label="Send A" defaultValue="-inf" $tight/>
                <StyledField aria-label="Send B" defaultValue="-inf" $tight/>
            </StyledMixerRows>
            <Meter mark={10}/>
        </StyledMixerCell>
    </StyledTrack>
)

const StyledEmptyMixer = styled(StyledCell)`
    grid-column: 2 / 5;
`

const StyledSlimCell = styled(StyledIoCell)`
    padding-top: 2px;
`

const StyledSlimMixer = styled(StyledMixerCell)`
    padding: 2px 4px 2px 4px;
`

const returns = [
    {id: 'A', name: 'A Reverb', color: '#22e6fa'},
    {id: 'B', name: 'B Delay', color: '#ffeda6'},
]

const seconds = ['0:00:000', '0:00:200', '0:00:400', '0:00:600', '0:00:800', '0:01:000', '0:01:200', '0:01:400', '0:01:600']
const beats = ['1', '1.1.3', '1.2', '1.2.3', '1.3', '1.3.3', '1.4', '1.4.3']

const Marker: React.FC<{flip?: boolean, filled?: boolean}> = ({flip, filled}) => (
    <svg width="12" height="12" stroke={COLORS.ink} fill={filled ? '#b4b6ba' : COLORS.control}>
        <path d={flip ? 'M12 0L1 6L12 12' : 'M0 0L11 6L0 12'}/>
    </svg>
)

const Arranger: React.FC = () => (
    <StyledArranger>
        <StyledArrangerPanel>
            <StyledOverview><StyledOverviewWindow/></StyledOverview>
            <StyledTimelineHead>
                <div>
                    <StyledRuler $height={35}>
                        {beats.map(beat => <span key={beat}>{beat}</span>)}
                    </StyledRuler>
                    <StyledLoopBar><Marker/><Marker flip/></StyledLoopBar>
                    <StyledScrub/>
                </div>
                <StyledLocators>
                    <StyledCircle aria-label="Previous locator">
                        <svg width="11" height="9"><path d="M0.5 4.5L5 0.5v3.2h5.5v1.6H5v3.2z" fill="#45484c"/></svg>
                    </StyledCircle>
                    <StyledLocatorPill>Set</StyledLocatorPill>
                    <StyledCircle aria-label="Next locator">
                        <svg width="11" height="9"><path d="M10.5 4.5L6 0.5v3H0.5v2H6v3z"/></svg>
                    </StyledCircle>
                    <StyledLock aria-label="Lock envelopes">
                        <svg width="9" height="11">
                            <rect x="1" y="4.5" width="7" height="6" fill="#26282b"/>
                            <path d="M2 5V3.5a2.5 2.5 0 0 1 5 0V5" fill="none" stroke="#4a4d51" strokeWidth="1.2"/>
                        </svg>
                    </StyledLock>
                </StyledLocators>
            </StyledTimelineHead>
            <StyledTracks>
                {tracks.map(track => <TrackRow key={track.id} track={track}/>)}
                <StyledTrack $height={17}>
                    <StyledEmptyLane/>
                    <StyledEmptyMixer/>
                </StyledTrack>
                {returns.map(({id, name, color}, index) => (
                    <StyledTrack key={id} $height={22} $spaced={index === 0}>
                        <StyledEmptyLane/>
                        <StyledNameStrip $color={color}><FoldButton/>{name}</StyledNameStrip>
                        <StyledSlimCell><StyledEmptyBox/></StyledSlimCell>
                        <StyledSlimMixer>
                            <StyledMixerRows>
                                <StyledWide><StyledBoxButton $bold $on>{id}</StyledBoxButton></StyledWide>
                                <StyledSendRow>
                                    <StyledBoxButton $bold>S</StyledBoxButton>
                                    <StyledBoxButton $on>Post</StyledBoxButton>
                                </StyledSendRow>
                            </StyledMixerRows>
                            <Meter mark={2}/>
                        </StyledSlimMixer>
                    </StyledTrack>
                ))}
                <StyledTrack $height={22}>
                    <StyledEmptyLane><StyledGridLabel>1/32</StyledGridLabel></StyledEmptyLane>
                    <StyledNameStrip $color="#1aa2e8"><FoldButton/>&nbsp;Master</StyledNameStrip>
                    <StyledSlimCell>
                        <Select
                            label="Master output"
                            value="1/2"
                            indent={13}
                            glyph={<svg width="7" height="11"><path d="M0 0h3v2H0zM4 0h3v2H4zM0 3h3v8H0zM4 3h3v8H4z"/></svg>}
                        />
                    </StyledSlimCell>
                    <StyledSlimMixer>
                        <StyledMixerRows>
                            <StyledWide><StyledField aria-label="Master volume" defaultValue="0" $fill={84}/></StyledWide>
                            <StyledWide><StyledField aria-label="Cue volume" defaultValue="6.0" $background={COLORS.blue}/></StyledWide>
                        </StyledMixerRows>
                        <Meter mark={2}/>
                    </StyledSlimMixer>
                </StyledTrack>
            </StyledTracks>
            <StyledTrack $height={23}>
                <StyledTimeRuler>
                    {seconds.map(second => <span key={second}>{second}</span>)}
                </StyledTimeRuler>
            </StyledTrack>
        </StyledArrangerPanel>
        <StyledGutter>
            <StyledViewNotch>
                <div>
                    <StyledRoundTab aria-label="Arrangement view">
                        <svg width="14" height="14" fill={COLORS.yellow}><path d="M0 0.5h14v3H0zM0 5.5h14v3H0zM0 10.5h14v3H0z"/></svg>
                    </StyledRoundTab>
                    <StyledRoundTab aria-label="Session view">
                        <svg width="14" height="14" fill="#85888c"><path d="M0.5 0h3v14h-3zM5.5 0h3v14h-3zM10.5 0h3v14h-3z"/></svg>
                    </StyledRoundTab>
                </div>
            </StyledViewNotch>
            <StyledGutterBody>
                <StyledShowButton $on>I·O</StyledShowButton>
                <StyledShowButton $on>R</StyledShowButton>
                <StyledShowButton $on>M</StyledShowButton>
                <StyledShowButton>D</StyledShowButton>
            </StyledGutterBody>
        </StyledGutter>
    </StyledArranger>
)

/* detail view */

const StyledLower = styled.div`
    display: flex;
    gap: 11px;
    margin-top: 11px;
`

const StyledInfoView = styled.aside`
    flex: none;
    width: 254px;
    padding: 6px;
    background-color: ${COLORS.shell};
    border-radius: 9px;

    > div {
        height: 100%;
        background-color: ${COLORS.surface};
        border-top: 22px solid ${COLORS.light};
    }
`

const StyledDetail = styled.div`
    flex: 1;
    min-width: 0;
    display: grid;
    grid-template-columns: 87px 185px minmax(0, 1fr);
    gap: 7px;
    padding: 9px 9px 8px 8px;
    background-color: ${COLORS.shellDark};
    border-radius: 9px;
`

const StyledBoxHeader = styled.div<{$spread?: boolean}>`
    display: flex;
    align-items: center;
    justify-content: ${props => props.$spread ? 'space-between' : 'flex-start'};
    gap: 8px;
    height: 21px;
    padding: 0 6px 0 4px;
    background-color: ${COLORS.purple};
    color: #fff;
    font-weight: bold;
    font-style: italic;
`

const StyledClipBox = styled.section`
    background-color: ${COLORS.surface};
`

const StyledClipRows = styled.div`
    display: grid;
    grid-template-rows: 17px 17px 20px 17px 2px 17px 17px 17px 5px 17px;
    align-content: space-between;
    height: 188px;
    padding: 3px 6px 4px 5px;
`

const StyledSignature = styled.div`
    display: grid;
    grid-template-columns: 1fr 8px 1fr;
    text-align: center;
`

const StyledSplit = styled.div`
    display: grid;
    grid-template-columns: 1fr 1fr;
    gap: 5px;
`

const StyledLabelRow = styled.div`
    display: flex;
    align-items: center;
    justify-content: space-between;
    min-height: 17px;
    white-space: nowrap;

    ${StyledPill} {
        width: 28px;
    }
`

const StyledClipTabs = styled.div`
    display: flex;
    gap: 8px;
    padding: 8px 5px;
`

const StyledNotesBox = styled.section`
    background-color: ${COLORS.surface};
    height: 236px;
`

const StyledNotesBody = styled.div`
    display: grid;
    grid-template-columns: 84px 2px 1fr;
    gap: 6px;
    height: 215px;
    padding: 3px 6px 5px 5px;
`

const StyledNotesColumn = styled.div`
    display: flex;
    flex-direction: column;
    justify-content: space-between;
`

const StyledDivider = styled.div`
    background-color: ${COLORS.shell};
`

const StyledNumbers = styled.div`
    display: grid;
    grid-template-columns: 1fr 20px 20px;
    gap: 2px;
`

const StyledLoopBlock = styled.div`
    display: grid;
    grid-template-rows: 2px 17px;
    gap: 8px;
    height: 38px;
    padding-top: 8px;
`

const Numbers: React.FC<{label: string, values: number[], dim?: boolean}> = ({label, values, dim}) => (
    <StyledNumbers>
        {values.map((value, index) => (
            <StyledField
                key={index}
                aria-label={`${label} ${index + 1}`}
                defaultValue={value}
                $align="right"
                $background={dim ? '#85888c' : undefined}
            />
        ))}
    </StyledNumbers>
)

const SetRow: React.FC<{label: string}> = ({label}) => (
    <StyledLabelRow>{label}<StyledPill $dim>Set</StyledPill></StyledLabelRow>
)

const StyledEditor = styled.section`
    display: grid;
    grid-template-columns: 61px minmax(0, 1fr);
    grid-template-rows: 73px 112px 5px 46px;
    padding-right: 2px;
    background-color: ${COLORS.surface};
`

const StyledEditorCorner = styled.div`
    display: flex;
    flex-direction: column;
    justify-content: space-between;
    align-items: flex-end;
    padding: 2px 2px 3px 4px;
`

const StyledFold = styled(StyledBoxButton)`
    align-self: flex-start;
    width: 35px;
`

const StyledEditorRuler = styled(StyledRuler)`
    background-color: #818488;
`

const StyledEditorLoop = styled(StyledLoopBar)`
    background-color: ${COLORS.ink};
`

const StyledEditorMarkers = styled.div`
    ${cssGrid};
    display: flex;
    justify-content: space-between;
    height: 14px;
`

const StyledEditorScrub = styled.div`
    display: flex;
    justify-content: space-between;
    height: 15px;
    border-top: 1px solid ${COLORS.shell};
    background:
        repeating-linear-gradient(90deg, rgba(0, 0, 0, 0.07) 0 1px, transparent 1px calc(100% / 64)),
        ${COLORS.surfaceDark};
`

const StyledEditorGap = styled.div`
    height: 7px;
    background-color: ${COLORS.shell};
`

const StyledKeys = styled.div`
    display: grid;
    grid-template-columns: 37px 24px;
    grid-template-rows: 30px 30px 31px;
    padding-left: 1px;
    border-right: 1px solid ${COLORS.ink};
    box-shadow: inset 0 1px 0 #73767a;
`

const StyledKeyLabel = styled.div`
    padding: 9px 0 0 4px;
    border-right: 1px solid #73767a;
    border-bottom: 1px solid #5f6266;
`

const StyledKey = styled.button<{$black?: boolean}>`
    background-color: ${props => props.$black ? '#000' : '#fff'};
`

const cssMintGrid = css`
    repeating-linear-gradient(90deg, rgba(0, 0, 0, 0.08) 0 1px, transparent 1px calc(100% / 64)),
    repeating-linear-gradient(90deg, ${COLORS.mintDark} 0 25%, ${COLORS.mint} 25% 50%)
`

const StyledNoteArea = styled.div`
    position: relative;
    background:
        linear-gradient(rgba(0, 0, 0, 0.15), rgba(0, 0, 0, 0.15)) 0 90px / 100% 1px no-repeat,
        linear-gradient(rgba(0, 0, 0, 0.1), rgba(0, 0, 0, 0.1)) 0 30px / 100% 30px no-repeat,
        ${cssMintGrid};
`

const StyledNote = styled.button<{$row: number}>`
    position: absolute;
    top: ${props => props.$row * 30 + (props.$row > 0 ? 1 : 0)}px;
    height: 29px;
    padding-left: 2px;
    border: 1px solid #000;
    background-color: ${COLORS.red};
    text-align: left;
`

const StyledEditorDivider = styled.div`
    grid-column: 1 / 3;
    background-color: ${COLORS.shell};
`

const StyledVelocityScale = styled.div`
    display: grid;
    grid-template-columns: 15px 1fr 6px;
    align-items: end;
    gap: 0 3px;
    padding: 0 0 1px 2px;
`

const StyledVelocityLabels = styled.div`
    align-self: stretch;
    display: flex;
    flex-direction: column;
    justify-content: space-between;
    text-align: right;
`

const StyledBracket = styled.div`
    align-self: stretch;
    border: 2px solid #000;
    border-left: 0;
`

const StyledVelocity = styled.div`
    position: relative;
    display: flex;
    justify-content: flex-end;
    align-items: flex-end;
    padding-bottom: 2px;
    overflow: hidden;
    background: ${cssMintGrid};
`

const StyledStem = styled.i`
    position: absolute;
    top: 11px;
    bottom: 0;
    width: 2px;
    background-color: ${COLORS.stem};

    &::before {
        content: '';
        position: absolute;
        left: -3px;
        top: -4px;
        width: 8px;
        height: 8px;
        border: 2px solid ${COLORS.stem};
        border-radius: 50%;
        background-color: ${COLORS.mint};
    }
`

const percent = (unit: number) => `${unit / 64 * 100}%`

const stems = Array.from(new Set(notes.map(note => note.start)))

const NoteEditor: React.FC = () => (
    <StyledEditor>
        <StyledEditorCorner>
            <StyledFold $on>Fold</StyledFold>
            <HeadphoneButton/>
        </StyledEditorCorner>
        <div>
            <StyledEditorRuler $height={23}>
                {beats.map(beat => <span key={beat}>{beat}</span>)}
            </StyledEditorRuler>
            <StyledEditorLoop><Marker filled/><Marker filled flip/></StyledEditorLoop>
            <StyledEditorMarkers $division={64}><Marker/><Marker flip/></StyledEditorMarkers>
            <StyledEditorScrub>
                <svg width="6" height="14"><path d="M0 0.5h5v8l-5 5z" fill={COLORS.control} stroke={COLORS.ink}/></svg>
                <svg width="6" height="14"><path d="M6 0.5H1v8l5 5z" fill={COLORS.control} stroke={COLORS.ink}/></svg>
            </StyledEditorScrub>
            <StyledEditorGap/>
        </div>
        <StyledKeys>
            {[1, 2, 3].map(key => (
                <React.Fragment key={key}>
                    <StyledKeyLabel>{key}</StyledKeyLabel>
                    <StyledKey aria-label={`Key ${key}`} $black={key === 2}/>
                </React.Fragment>
            ))}
        </StyledKeys>
        <StyledNoteArea>
            {notes.map(({row, start, end}) => (
                <StyledNote
                    key={`${row}-${start}`}
                    $row={row}
                    style={{left: percent(start), width: percent(end - start)}}
                >
                    {row + 1}
                </StyledNote>
            ))}
        </StyledNoteArea>
        <StyledEditorDivider/>
        <StyledVelocityScale>
            <StyledCircle $size={14} aria-label="Show envelopes">
                <svg width="7" height="8"><path d="M1 0l6 4-6 4z"/></svg>
            </StyledCircle>
            <StyledVelocityLabels><span>127</span><span>1</span></StyledVelocityLabels>
            <StyledBracket/>
        </StyledVelocityScale>
        <StyledVelocity>
            {stems.map(start => <StyledStem key={start} style={{left: percent(start)}}/>)}
            <StyledGridLabel>1/64</StyledGridLabel>
        </StyledVelocity>
    </StyledEditor>
)

const Detail: React.FC = () => (
    <StyledDetail>
        <div>
            <StyledClipBox>
                <StyledBoxHeader>
                    <StyledCircle $size={15} $fill={COLORS.yellow} aria-label="Clip activator">
                        <svg width="9" height="9"><circle cx="4.5" cy="4.5" r="4" fill="#a39a6a"/><path d="M4.5 1.5v6" stroke={COLORS.yellow} strokeWidth="1.5"/></svg>
                    </StyledCircle>
                    Clip
                </StyledBoxHeader>
                <StyledClipRows>
                    <StyledField aria-label="Clip name"/>
                    <Select label="Clip color" value="" background={COLORS.purple}/>
                    <StyledLabelRow>Signature</StyledLabelRow>
                    <StyledSignature>
                        <StyledField aria-label="Numerator" defaultValue="4"/>
                        /
                        <StyledField aria-label="Denominator" defaultValue="4"/>
                    </StyledSignature>
                    <span/>
                    <StyledLabelRow>
                        Groove
                        <StyledCircle aria-label="Hot-swap groove">
                            <svg width="11" height="11" fill="none" stroke="#000" strokeWidth="1.6">
                                <path d="M2 7.5C1 4 3.5 1.5 6 2M9 3.5C10 7 7.5 9.5 5 9"/>
                                <path d="M0.5 6h3l-1 3zM10.5 5h-3l1-3z" fill="#000" stroke="none"/>
                            </svg>
                        </StyledCircle>
                    </StyledLabelRow>
                    <StyledField aria-label="Groove" defaultValue="None" $align="left" $background={COLORS.control}/>
                    <StyledPill $dim>Commit</StyledPill>
                    <span/>
                    <StyledSplit>
                        <StyledPill $dim $shape="9px 0 0 9px">&lt;&lt;</StyledPill>
                        <StyledPill $dim $shape="0 9px 9px 0">&gt;&gt;</StyledPill>
                    </StyledSplit>
                </StyledClipRows>
            </StyledClipBox>
            <StyledClipTabs>
                <StyledShowButton $on aria-label="Show notes">
                    <svg width="17" height="17" fill="none" stroke="#3d3205" strokeWidth="1.3">
                        <path d="M6.5 12V5l6-1v7"/>
                        <ellipse cx="5.2" cy="12" rx="1.6" ry="1.2"/>
                        <ellipse cx="11.2" cy="11.2" rx="1.6" ry="1.2"/>
                    </svg>
                </StyledShowButton>
                <StyledShowButton>E</StyledShowButton>
            </StyledClipTabs>
        </div>
        <StyledNotesBox>
            <StyledBoxHeader $spread>
                Notes
                <StyledCircle $fill={COLORS.yellow} aria-label="Next">
                    <svg width="11" height="9"><path d="M10 4.5L6 1v2.7H1.5v1.6H6V8z"/></svg>
                </StyledCircle>
            </StyledBoxHeader>
            <StyledNotesBody>
                <StyledNotesColumn>
                    <StyledField aria-label="Note range" defaultValue="C1-D1"/>
                    <StyledSplit><StyledPill>:2</StyledPill><StyledPill>*2</StyledPill></StyledSplit>
                    <StyledSplit><StyledPill>Rev</StyledPill><StyledPill>Inv</StyledPill></StyledSplit>
                    <StyledPill>Legato</StyledPill>
                    <StyledPill>Dupl.Loop</StyledPill>
                    <StyledLabelRow/>
                    <StyledLabelRow>Pgm Change</StyledLabelRow>
                    <StyledField aria-label="Bank" defaultValue="Bank ---" $align="left"/>
                    <StyledField aria-label="Sub" defaultValue="Sub ---" $align="left"/>
                    <StyledField aria-label="Program" defaultValue="Pgm ---" $align="left"/>
                </StyledNotesColumn>
                <StyledDivider/>
                <StyledNotesColumn>
                    <SetRow label="Start"/>
                    <Numbers label="Start" values={[1, 1, 1]}/>
                    <SetRow label="End"/>
                    <Numbers label="End" values={[2, 1, 1]} dim/>
                    <StyledLoopBlock>
                        <StyledDivider/>
                        <StyledBoxButton $on>Loop</StyledBoxButton>
                    </StyledLoopBlock>
                    <SetRow label="Position"/>
                    <Numbers label="Position" values={[1, 1, 1]}/>
                    <SetRow label="Length"/>
                    <Numbers label="Length" values={[1, 0, 0]}/>
                </StyledNotesColumn>
            </StyledNotesBody>
        </StyledNotesBox>
        <NoteEditor/>
    </StyledDetail>
)

const StyledFooter = styled.div`
    display: flex;
    margin-bottom: -9px;
    height: 9px;

    i {
        width: 264px;
        background-color: ${COLORS.shellDark};
    }
`

const App: React.FC = () => (
    <StyledApp>
        <GlobalStyle/>
        <Toolbar/>
        <StyledUpper>
            <Browser/>
            <Arranger/>
        </StyledUpper>
        <StyledLower>
            <StyledInfoView><div/></StyledInfoView>
            <Detail/>
        </StyledLower>
        <StyledFooter>
            <StyledSpacer grow={1399}/>
            <i/>
            <StyledSpacer grow={237}/>
        </StyledFooter>
    </StyledApp>
)

export default App;
